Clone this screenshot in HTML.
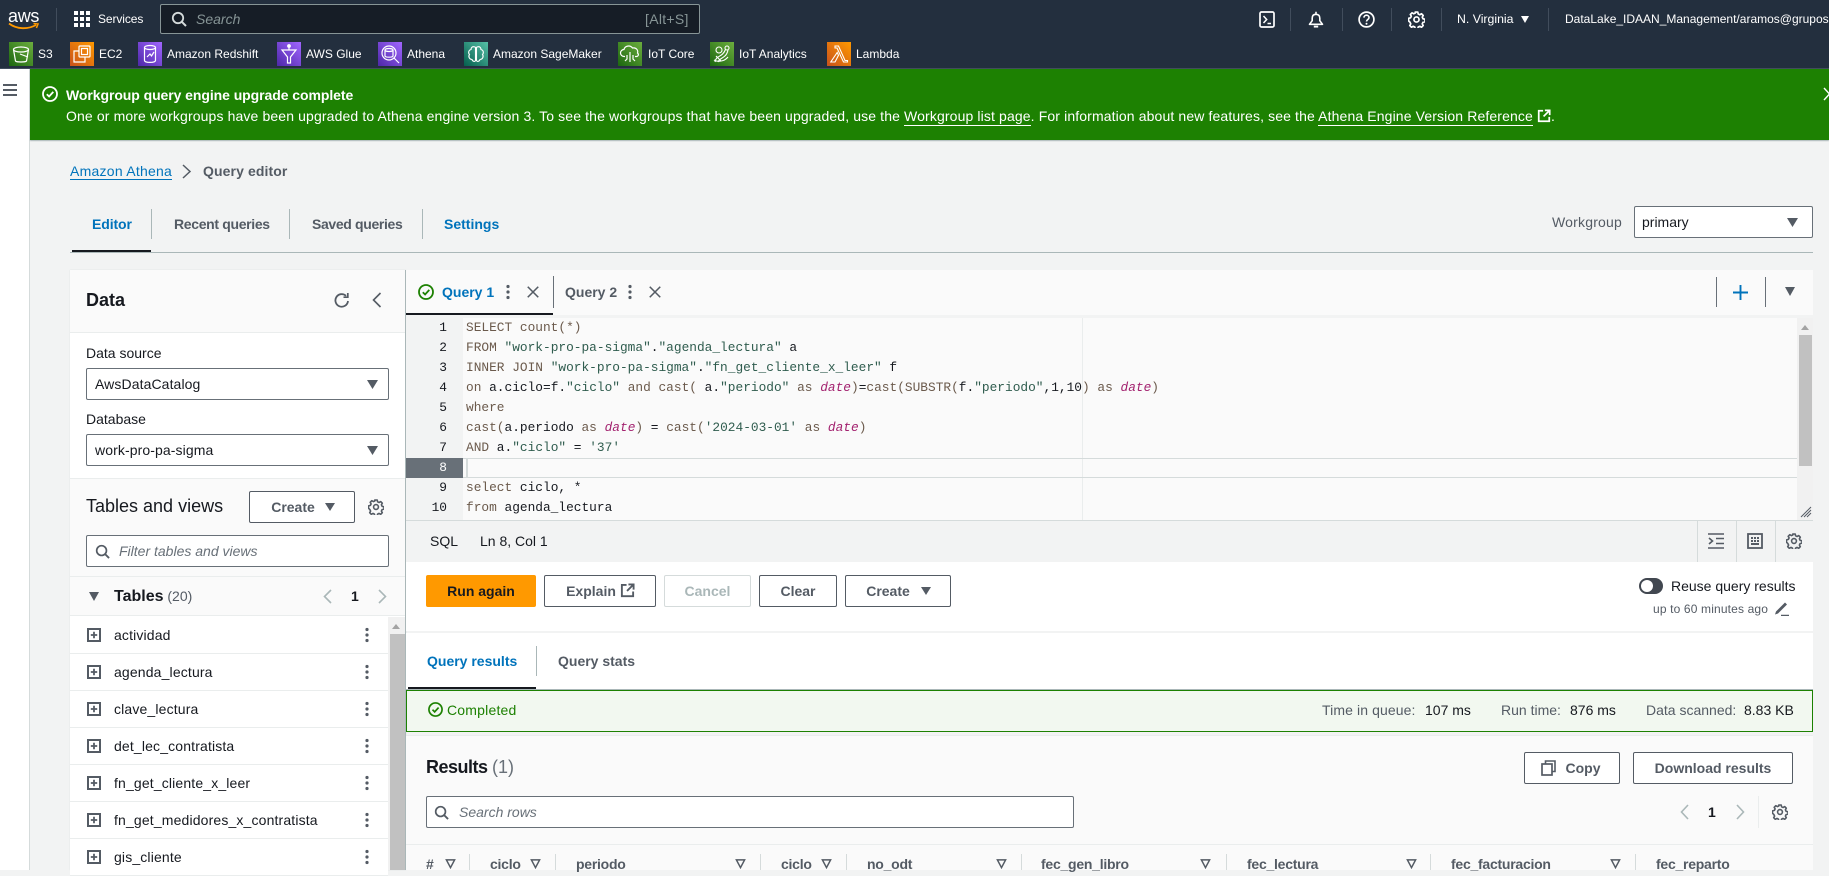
<!DOCTYPE html>
<html lang="en"><head><meta charset="utf-8"><title>Athena Query editor</title>
<style>
*{box-sizing:border-box}
html,body{margin:0;padding:0;width:1829px;height:870px;overflow:hidden;background:#f2f3f3;font-family:"Liberation Sans",Arial,sans-serif;font-size:14px;color:#16191f}
.a{position:absolute}
.t{position:absolute;white-space:nowrap;line-height:20px}
.b{font-weight:700}.g{color:#545b64}.bl{color:#0073bb}.w{color:#fff}
.nav{color:#fff;font-size:12px}
.sv{position:absolute;top:42px;width:24px;height:24px}
.svl{position:absolute;top:44px;white-space:nowrap;line-height:20px;color:#fff;font-size:12px}
.sep{position:absolute;width:1px;background:#414d5c}
.vs{position:absolute;width:1px;background:#aab7b8}
.box{position:absolute;background:#fff;border:1px solid #687078;border-radius:2px;height:32px}
.btn{position:absolute;background:#fff;border:1px solid #545b64;border-radius:2px;height:32px;font-weight:700;color:#545b64;text-align:center;line-height:30px;white-space:nowrap}
.row{position:absolute;left:70px;width:318px;height:37px;background:#fff;border-bottom:1px solid #eaeded}
.row span{position:absolute;left:44px;top:8px;line-height:20px;white-space:nowrap;color:#16191f;letter-spacing:.15px}
.row svg{position:absolute}
.code{position:absolute;left:466px;font-family:"Liberation Mono",monospace;font-size:12.83px;line-height:20px;white-space:pre;color:#16191f}
.ln{position:absolute;left:406px;width:41px;text-align:right;font-family:"Liberation Mono",monospace;font-size:12.83px;line-height:20px;color:#16191f}
.k{color:#6b5a4c}.s{color:#2f5c4e}.d{color:#a3226f;font-style:italic}
.lnk{border-bottom:1px solid #fff;padding-bottom:1px}
.th{position:absolute;top:854px;line-height:20px;font-weight:700;color:#545b64;white-space:nowrap;letter-spacing:-.25px}
.tv{position:absolute;top:854px;width:1px;height:16px;background:#d5dbdb}
</style></head><body>
<svg width="0" height="0" style="position:absolute">
<symbol id="gear" viewBox="0 0 16 16"><path d="M6.8 1h2.400l.4 1.800 1.500.7 1.600-.9 1.600 1.600-.9 1.600.7 1.500 1.900.5v2.300l-1.900.5-.7 1.500.9 1.600-1.600 1.600-1.600-.9-1.500.7-.4 1.900H6.800l-.4-1.900-1.500-.7-1.600.9-1.600-1.600.9-1.600-.7-1.500L.5 9.200V6.900l1.900-.5.7-1.500-.9-1.600 1.600-1.600 1.600.9 1.500-.7z" fill="none" stroke="currentColor" stroke-width="1.600" stroke-linejoin="round"/><circle cx="8" cy="8" r="2.400" fill="none" stroke="currentColor" stroke-width="1.600"/></symbol>
<symbol id="srch" viewBox="0 0 16 16"><circle cx="7" cy="7" r="5.200" fill="none" stroke="currentColor" stroke-width="1.800"/><path d="M10.800 10.800l4.200 4.200" stroke="currentColor" stroke-width="2" fill="none"/></symbol>
<symbol id="chk" viewBox="0 0 16 16"><circle cx="8" cy="8" r="7" fill="none" stroke="currentColor" stroke-width="1.800"/><path d="M4.800 8.200l2.300 2.300 4.200-4.600" fill="none" stroke="currentColor" stroke-width="1.800"/></symbol>
<symbol id="x" viewBox="0 0 16 16"><path d="M2 2l12 12M14 2L2 14" stroke="currentColor" stroke-width="1.800" fill="none"/></symbol>
<symbol id="dots" viewBox="0 0 4 16"><circle cx="2" cy="2.500" r="1.600" fill="currentColor"/><circle cx="2" cy="8" r="1.600" fill="currentColor"/><circle cx="2" cy="13.500" r="1.600" fill="currentColor"/></symbol>
<symbol id="plus" viewBox="0 0 14 14"><rect x="1" y="1" width="12" height="12" fill="#fff" stroke="#545b64" stroke-width="2"/><path d="M7 3.800v6.400M3.800 7h6.400" stroke="#545b64" stroke-width="1.800"/></symbol>
<symbol id="ext" viewBox="0 0 16 16"><path d="M7 2H2v12h12V9" fill="none" stroke="currentColor" stroke-width="2"/><path d="M9 1.500h5.500V7M14 2L7.500 8.500" fill="none" stroke="currentColor" stroke-width="2"/></symbol>
<symbol id="filt" viewBox="0 0 12 12"><path d="M1.500 2h9L6 10.500z" fill="none" stroke="currentColor" stroke-width="1.600"/></symbol>
</svg>

<!-- top nav -->
<div class="a" style="left:0;top:0;width:1829px;height:69px;background:#232f3e;border-bottom:1px solid #414d5c"></div>
<div class="t w" style="left:8px;top:6px;font-size:18px;line-height:20px;letter-spacing:-.3px;font-weight:400">aws</div>
<svg class="a" style="left:8px;top:22px" width="32" height="9" viewBox="0 0 32 9"><path d="M1 1.500C9 7.500 20 7.500 28 3" fill="none" stroke="#f90" stroke-width="1.800"/><path d="M25.500 1.500L30 2l-1.600 4" fill="none" stroke="#f90" stroke-width="1.500"/></svg>
<div class="sep" style="left:56px;top:8px;height:23px"></div>
<svg class="a" style="left:74px;top:11px" width="16" height="16"><g fill="#fff"><rect x="0" y="0" width="4" height="4"/><rect x="6" y="0" width="4" height="4"/><rect x="12" y="0" width="4" height="4"/><rect x="0" y="6" width="4" height="4"/><rect x="6" y="6" width="4" height="4"/><rect x="12" y="6" width="4" height="4"/><rect x="0" y="12" width="4" height="4"/><rect x="6" y="12" width="4" height="4"/><rect x="12" y="12" width="4" height="4"/></g></svg>
<div class="t nav" style="left:98px;top:9px;letter-spacing:-.1px">Services</div>
<div class="a" style="left:160px;top:4px;width:540px;height:30px;background:#161d26;border:1px solid #879596;border-radius:2px"></div>
<svg class="a" style="left:171px;top:11px;color:#d5dbdb" width="16" height="16"><use href="#srch"/></svg>
<div class="t" style="left:196px;top:9px;font-style:italic;color:#879596">Search</div>
<div class="t" style="left:645px;top:9px;color:#879596;font-size:14px;letter-spacing:.3px">[Alt+S]</div>
<svg class="a" style="left:1259px;top:11px" width="16" height="17" viewBox="0 0 16 17"><rect x="1" y="1" width="14" height="15" rx="1.500" fill="none" stroke="#fff" stroke-width="1.700"/><path d="M4.500 5l3.200 3.500-3.200 3.500M8.500 12.500h3.500" fill="none" stroke="#fff" stroke-width="1.500"/></svg>
<div class="sep" style="left:1290px;top:8px;height:23px"></div>
<svg class="a" style="left:1308px;top:11px" width="16" height="17" viewBox="0 0 16 17"><path d="M8 3.300c-2.500 0-3.800 1.500-3.800 3.900v2.500L1.500 13.300h13l-2.700-3.600V7.200C11.800 4.800 10.500 3.300 8 3.300zM8 .8v2.500" fill="none" stroke="#fff" stroke-width="1.600" stroke-linejoin="round"/><path d="M5.800 15.600h4.400" stroke="#fff" stroke-width="1.900"/></svg>
<div class="sep" style="left:1342px;top:8px;height:23px"></div>
<svg class="a" style="left:1358px;top:11px" width="17" height="17" viewBox="0 0 17 17"><circle cx="8.500" cy="8.500" r="7.400" fill="none" stroke="#fff" stroke-width="1.700"/><path d="M6 6.600c0-3.200 5-3.200 5 0 0 1.900-2.500 1.900-2.500 3.900" fill="none" stroke="#fff" stroke-width="1.600"/><circle cx="8.500" cy="12.700" r="1" fill="#fff"/></svg>
<div class="sep" style="left:1391px;top:8px;height:23px"></div>
<svg class="a" style="left:1408px;top:11px;color:#fff" width="17" height="17"><use href="#gear"/></svg>
<div class="sep" style="left:1441px;top:8px;height:23px"></div>
<div class="t nav" style="left:1457px;top:9px;font-size:12.300px">N. Virginia</div>
<svg class="a" style="left:1521px;top:16px" width="8" height="7"><path d="M0 0h8L4 7z" fill="#fff"/></svg>
<div class="sep" style="left:1548px;top:8px;height:23px"></div>
<div class="t nav" style="left:1565px;top:9px">DataLake_IDAAN_Management/aramos@grupos</div>

<!-- services -->
<svg class="sv" style="left:9px;background:linear-gradient(45deg,#1b660f,#6cae3e)" viewBox="0 0 24 24"><g fill="none" stroke="#fff" stroke-width="1.200"><ellipse cx="12" cy="7.500" rx="7.500" ry="2.500"/><path d="M4.500 7.500l2 11.500c.8 1.300 10.200 1.300 11 0l2-11.500M11 12l8 3"/></g></svg><div class="svl" style="left:38px">S3</div>
<svg class="sv" style="left:70px;background:linear-gradient(45deg,#c8511b,#f90)" viewBox="0 0 24 24"><g fill="none" stroke="#fff" stroke-width="1.200"><rect x="9" y="4" width="11" height="11" rx="1"/><rect x="11.500" y="6.500" width="6" height="6"/><path d="M9 9H4v11h11v-5"/></g></svg><div class="svl" style="left:99px">EC2</div>
<svg class="sv" style="left:138px;background:linear-gradient(45deg,#4d27a8,#a166ff)" viewBox="0 0 24 24"><g fill="none" stroke="#fff" stroke-width="1.200"><ellipse cx="12" cy="5.500" rx="5.500" ry="2"/><path d="M6.500 5.500v13c0 2.500 11 2.500 11 0v-13M9 15l3-3 1.500 2 2.500-4"/></g></svg><div class="svl" style="left:167px">Amazon Redshift</div>
<svg class="sv" style="left:277px;background:linear-gradient(45deg,#4d27a8,#a166ff)" viewBox="0 0 24 24"><g fill="none" stroke="#fff" stroke-width="1.200"><path d="M5 8h14l-5.500 7v6h-3v-6zM12 3v5"/><circle cx="12" cy="4" r="1.300" fill="#fff"/></g></svg><div class="svl" style="left:306px">AWS Glue</div>
<svg class="sv" style="left:378px;background:linear-gradient(45deg,#4d27a8,#a166ff)" viewBox="0 0 24 24"><g fill="none" stroke="#fff" stroke-width="1.200"><circle cx="11" cy="11" r="7"/><ellipse cx="11" cy="8" rx="4" ry="1.500"/><path d="M7 8v6c0 1.600 8 1.600 8 0V8M16 16l5 5"/></g></svg><div class="svl" style="left:407px">Athena</div>
<svg class="sv" style="left:464px;background:linear-gradient(45deg,#055f4e,#56c0a7)" viewBox="0 0 24 24"><g fill="none" stroke="#fff" stroke-width="1.100"><path d="M11 5C8 4 7 6 7 7.500 4.500 8 4 11 5.500 12.500 4 14.500 5.500 17.500 8 17.500 8.500 19.500 11 20 11.500 18.500V5.500zM13 5c3-1 4 1 4 2.500 2.500.5 3 3.500 1.500 5 1.500 2 0 5-2.500 5-.5 2-3 2.500-3.500 1V5.500z"/></g></svg><div class="svl" style="left:493px">Amazon SageMaker</div>
<svg class="sv" style="left:618px;background:linear-gradient(45deg,#1b660f,#6cae3e)" viewBox="0 0 24 24"><g fill="none" stroke="#fff" stroke-width="1.200"><path d="M7 14.500H6a3.500 3.500 0 0 1 0-7c.7-3.500 6-5 8.500-1.500 3.500-.7 6 2 5 5 1.800 1.500.5 3.500-1 3.500H17"/><path d="M12 10v10M9 13v4l-2 2M15 13v4l2 2"/></g></svg><div class="svl" style="left:648px">IoT Core</div>
<svg class="sv" style="left:710px;background:linear-gradient(45deg,#1b660f,#6cae3e)" viewBox="0 0 24 24"><g fill="none" stroke="#fff" stroke-width="1.100"><circle cx="17" cy="6" r="2"/><circle cx="9" cy="8" r="3"/><path d="M5 20C6 13 12 16 15.500 7.500M8 20c2-5 8-3 10-12M4 18c3 2 10 2 14-3M6 14l5 5"/></g></svg><div class="svl" style="left:739px">IoT Analytics</div>
<svg class="sv" style="left:827px;background:linear-gradient(45deg,#c8511b,#f90)" viewBox="0 0 24 24"><path d="M8 4h3.500l6.500 14.500h2.500V20h-4L10 6H8zM10.200 10.500l1.300 2.800L8 20H3.800z" fill="none" stroke="#fff" stroke-width="1.100"/></svg><div class="svl" style="left:856px">Lambda</div>

<!-- side + banner -->
<div class="a" style="left:0;top:69px;width:30px;height:801px;background:#fff;border-right:1px solid #d5dbdb"></div>
<svg class="a" style="left:3px;top:84px" width="14" height="12"><path d="M0 1h14M0 6h14M0 11h14" stroke="#545b64" stroke-width="2"/></svg>
<div class="a" style="left:30px;top:69px;width:1799px;height:71px;background:#1d8102;box-shadow:0 1px 1px #aab7b8"></div>
<svg class="a" style="left:42px;top:86px;color:#fff" width="16" height="16"><use href="#chk"/></svg>
<div class="t b w" style="left:66px;top:85px;letter-spacing:-.07px">Workgroup query engine upgrade complete</div>
<div class="t w" style="left:66px;top:106px;letter-spacing:.125px" id="msg">One or more workgroups have been upgraded to Athena engine version 3. To see the workgroups that have been upgraded, use the <span class="lnk">Workgroup list page</span>. For information about new features, see the <span class="lnk">Athena Engine Version Reference</span> <svg width="14" height="14" style="vertical-align:-2px;color:#fff"><use href="#ext"/></svg>.</div>
<svg class="a" style="left:1823px;top:87px" width="12" height="14"><path d="M1 1l11 12M12 1L1 13" stroke="#fff" stroke-width="1.400" fill="none"/></svg>

<!-- breadcrumb -->
<div class="t bl" style="left:70px;top:161px;border-bottom:1px solid #0073bb;line-height:18px;height:19px;padding-top:1px;letter-spacing:.25px">Amazon Athena</div>
<svg class="a" style="left:182px;top:164px" width="10" height="15"><path d="M1 1l7 6.500L1 14" fill="none" stroke="#545b64" stroke-width="1.500"/></svg>
<div class="t b g" style="left:203px;top:161px;letter-spacing:.1px">Query editor</div>

<!-- main tabs -->
<div class="t b bl" style="left:92px;top:214px;letter-spacing:-.1px">Editor</div>
<div class="vs" style="left:151px;top:209px;height:30px"></div>
<div class="t b g" style="left:174px;top:214px;letter-spacing:-.33px">Recent queries</div>
<div class="vs" style="left:289px;top:209px;height:30px"></div>
<div class="t b g" style="left:312px;top:214px;letter-spacing:-.35px">Saved queries</div>
<div class="vs" style="left:422px;top:209px;height:30px"></div>
<div class="t b bl" style="left:444px;top:214px">Settings</div>
<div class="a" style="left:70px;top:252px;width:1743px;height:1px;background:#aab7b8"></div>
<div class="a" style="left:72px;top:250px;width:79px;height:2px;background:#16191f"></div>
<div class="t g" style="left:1552px;top:212px;letter-spacing:.2px">Workgroup</div>
<div class="box" style="left:1634px;top:206px;width:179px"></div>
<div class="t" style="left:1642px;top:212px">primary</div>
<svg class="a" style="left:1787px;top:218px" width="11" height="9"><path d="M0 0h11L5.500 9z" fill="#545b64"/></svg>

<!-- left panel -->
<div class="a" style="left:70px;top:270px;width:336px;height:600px;background:#fff;box-shadow:0 0 1px #d5dbdb"></div>
<div class="a" style="left:70px;top:270px;width:335px;height:63px;background:#fafafa;border-bottom:1px solid #eaeded"></div>
<div class="t b" style="left:86px;top:290px;font-size:18px">Data</div>
<svg class="a" style="left:334px;top:292px" width="16" height="17" viewBox="0 0 16 17"><path d="M14 9a6.300 6.300 0 1 1-2-5.200" fill="none" stroke="#545b64" stroke-width="1.800"/><path d="M13.800 1v4.200H9.500" fill="none" stroke="#545b64" stroke-width="1.700"/></svg>
<svg class="a" style="left:372px;top:292px" width="10" height="16"><path d="M8.500 1L1.500 8l7 7" fill="none" stroke="#545b64" stroke-width="1.600"/></svg>
<div class="t" style="left:86px;top:343px;color:#16191f">Data source</div>
<div class="box" style="left:86px;top:368px;width:303px"></div>
<div class="t" style="left:95px;top:374px;letter-spacing:.1px">AwsDataCatalog</div>
<svg class="a" style="left:367px;top:380px" width="11" height="9"><path d="M0 0h11L5.500 9z" fill="#545b64"/></svg>
<div class="t" style="left:86px;top:409px">Database</div>
<div class="box" style="left:86px;top:434px;width:303px"></div>
<div class="t" style="left:95px;top:440px;letter-spacing:.1px">work-pro-pa-sigma</div>
<svg class="a" style="left:367px;top:446px" width="11" height="9"><path d="M0 0h11L5.500 9z" fill="#545b64"/></svg>
<div class="a" style="left:70px;top:478px;width:335px;height:138px;background:#fafafa;border-top:1px solid #eaeded;border-bottom:1px solid #eaeded"></div>
<div class="t" style="left:86px;top:496px;font-size:18px">Tables and views</div>
<div class="btn" style="left:249px;top:491px;width:106px;padding-right:18px">Create</div>
<svg class="a" style="left:325px;top:503px" width="10" height="8"><path d="M0 0h10L5 8z" fill="#545b64"/></svg>
<svg class="a" style="left:368px;top:499px;color:#545b64" width="16" height="16"><use href="#gear"/></svg>
<div class="box" style="left:86px;top:535px;width:303px"></div>
<svg class="a" style="left:95px;top:544px;color:#545b64" width="15" height="15"><use href="#srch"/></svg>
<div class="t" style="left:119px;top:541px;font-style:italic;color:#687078">Filter tables and views</div>
<div class="a" style="left:70px;top:576px;width:335px;height:1px;background:#eaeded"></div>
<svg class="a" style="left:89px;top:592px" width="10" height="9"><path d="M0 0h10L5 9z" fill="#545b64"/></svg>
<div class="t" style="left:114px;top:586px"><b style="font-size:16px">Tables</b> <span class="g">(20)</span></div>
<svg class="a" style="left:323px;top:589px" width="9" height="15"><path d="M8 1L1.500 7.500 8 14" fill="none" stroke="#aab7b8" stroke-width="1.600"/></svg>
<div class="t b" style="left:351px;top:586px">1</div>
<svg class="a" style="left:378px;top:589px" width="9" height="15"><path d="M1 1l6.500 6.500L1 14" fill="none" stroke="#aab7b8" stroke-width="1.600"/></svg>

<div class="row" style="top:617px"><svg style="left:17px;top:11px" width="14" height="14"><use href="#plus"/></svg><span>actividad</span><svg style="left:295px;top:10px;color:#545b64" width="4" height="16"><use href="#dots"/></svg></div>
<div class="row" style="top:654px"><svg style="left:17px;top:11px" width="14" height="14"><use href="#plus"/></svg><span>agenda_lectura</span><svg style="left:295px;top:10px;color:#545b64" width="4" height="16"><use href="#dots"/></svg></div>
<div class="row" style="top:691px"><svg style="left:17px;top:11px" width="14" height="14"><use href="#plus"/></svg><span>clave_lectura</span><svg style="left:295px;top:10px;color:#545b64" width="4" height="16"><use href="#dots"/></svg></div>
<div class="row" style="top:728px"><svg style="left:17px;top:11px" width="14" height="14"><use href="#plus"/></svg><span>det_lec_contratista</span><svg style="left:295px;top:10px;color:#545b64" width="4" height="16"><use href="#dots"/></svg></div>
<div class="row" style="top:765px"><svg style="left:17px;top:11px" width="14" height="14"><use href="#plus"/></svg><span>fn_get_cliente_x_leer</span><svg style="left:295px;top:10px;color:#545b64" width="4" height="16"><use href="#dots"/></svg></div>
<div class="row" style="top:802px"><svg style="left:17px;top:11px" width="14" height="14"><use href="#plus"/></svg><span>fn_get_medidores_x_contratista</span><svg style="left:295px;top:10px;color:#545b64" width="4" height="16"><use href="#dots"/></svg></div>
<div class="row" style="top:839px"><svg style="left:17px;top:11px" width="14" height="14"><use href="#plus"/></svg><span>gis_cliente</span><svg style="left:295px;top:10px;color:#545b64" width="4" height="16"><use href="#dots"/></svg></div>
<div class="a" style="left:388px;top:617px;width:17px;height:253px;background:#f1f1f1"></div>
<div class="a" style="left:390px;top:634px;width:15px;height:236px;background:#c1c1c1"></div>
<svg class="a" style="left:392px;top:624px" width="8" height="5"><path d="M0 5h8L4 0z" fill="#a3a3a3"/></svg>
<div class="a" style="left:405px;top:270px;width:1px;height:600px;background:#aab7b8"></div>

<!-- editor -->
<div class="a" style="left:406px;top:270px;width:1407px;height:45px;background:#fafafa"></div>
<div class="a" style="left:406px;top:315px;width:1407px;height:3px;background:#f2f3f3"></div>
<svg class="a" style="left:418px;top:284px;color:#1d8102" width="16" height="16"><use href="#chk"/></svg>
<div class="t b bl" style="left:442px;top:282px">Query 1</div>
<svg class="a" style="left:506px;top:284px;color:#545b64" width="4" height="16"><use href="#dots"/></svg>
<svg class="a" style="left:526px;top:285px;color:#545b64" width="14" height="14"><use href="#x"/></svg>
<div class="a" style="left:553px;top:276px;width:1px;height:32px;background:#687078"></div>
<div class="a" style="left:406px;top:313px;width:147px;height:2px;background:#16191f"></div>
<div class="t b g" style="left:565px;top:282px">Query 2</div>
<svg class="a" style="left:628px;top:284px;color:#545b64" width="4" height="16"><use href="#dots"/></svg>
<svg class="a" style="left:648px;top:285px;color:#545b64" width="14" height="14"><use href="#x"/></svg>
<div class="a" style="left:1716px;top:277px;width:1px;height:30px;background:#687078"></div>
<svg class="a" style="left:1733px;top:285px" width="15" height="15"><path d="M7.500 0v15M0 7.500h15" stroke="#0073bb" stroke-width="1.900"/></svg>
<div class="a" style="left:1765px;top:277px;width:1px;height:30px;background:#687078"></div>
<svg class="a" style="left:1785px;top:287px" width="10" height="9"><path d="M0 0h10L5 9z" fill="#545b64"/></svg>

<div class="a" style="left:406px;top:318px;width:1391px;height:202px;background:#fafafa"></div>
<div class="a" style="left:406px;top:318px;width:57px;height:202px;background:#f2f3f3"></div>
<div class="a" style="left:1082px;top:318px;width:1px;height:202px;background:#eaeded"></div>
<div class="a" style="left:463px;top:458px;width:1334px;height:20px;border-top:1px solid #d5dbdb;border-bottom:1px solid #d5dbdb"></div>
<div class="a" style="left:406px;top:458px;width:57px;height:20px;background:#687078"></div>
<div class="a" style="left:466px;top:459px;width:2px;height:18px;background:#d5dbdb"></div>
<div class="ln" style="top:318px">1</div><div class="ln" style="top:338px">2</div><div class="ln" style="top:358px">3</div><div class="ln" style="top:378px">4</div><div class="ln" style="top:398px">5</div><div class="ln" style="top:418px">6</div><div class="ln" style="top:438px">7</div><div class="ln" style="top:458px;color:#fff">8</div><div class="ln" style="top:478px">9</div><div class="ln" style="top:498px">10</div>
<div class="code" style="top:318px"><span class="k">SELECT count(*)</span></div>
<div class="code" style="top:338px"><span class="k">FROM</span> <span class="s">"work-pro-pa-sigma"</span>.<span class="s">"agenda_lectura"</span> a</div>
<div class="code" style="top:358px"><span class="k">INNER JOIN</span> <span class="s">"work-pro-pa-sigma"</span>.<span class="s">"fn_get_cliente_x_leer"</span> f</div>
<div class="code" style="top:378px"><span class="k">on</span> a.ciclo=f.<span class="s">"ciclo"</span> <span class="k">and cast(</span> a.<span class="s">"periodo"</span> <span class="k">as</span> <span class="d">date</span><span class="k">)</span>=<span class="k">cast(SUBSTR(</span>f.<span class="s">"periodo"</span>,1,10<span class="k">) as</span> <span class="d">date</span><span class="k">)</span></div>
<div class="code" style="top:398px"><span class="k">where</span></div>
<div class="code" style="top:418px"><span class="k">cast(</span>a.periodo <span class="k">as</span> <span class="d">date</span><span class="k">)</span> = <span class="k">cast(</span><span class="s">'2024-03-01'</span> <span class="k">as</span> <span class="d">date</span><span class="k">)</span></div>
<div class="code" style="top:438px"><span class="k">AND</span> a.<span class="s">"ciclo"</span> = <span class="s">'37'</span></div>
<div class="code" style="top:478px"><span class="k">select</span> ciclo, *</div>
<div class="code" style="top:498px"><span class="k">from</span> agenda_lectura</div>
<div class="a" style="left:1797px;top:318px;width:16px;height:202px;background:#f1f1f1"></div>
<div class="a" style="left:1799px;top:335px;width:13px;height:131px;background:#c1c1c1"></div>
<svg class="a" style="left:1801px;top:325px" width="8" height="5"><path d="M0 5h8L4 0z" fill="#a3a3a3"/></svg>
<svg class="a" style="left:1800px;top:506px" width="12" height="12"><path d="M1 11L11 1M4 11l7-7M7 11l4-4" stroke="#545b64" stroke-width="1" fill="none"/></svg>
<div class="a" style="left:406px;top:520px;width:1407px;height:42px;background:#f2f3f3;border-top:1px solid #d5dbdb"></div>
<div class="t" style="left:430px;top:531px">SQL</div>
<div class="t g" style="left:480px;top:531px;color:#16191f">Ln 8, Col 1</div>
<div class="a" style="left:1697px;top:521px;width:1px;height:41px;background:#d5dbdb"></div>
<div class="a" style="left:1736px;top:521px;width:1px;height:41px;background:#d5dbdb"></div>
<div class="a" style="left:1775px;top:521px;width:1px;height:41px;background:#d5dbdb"></div>
<svg class="a" style="left:1708px;top:533px" width="16" height="16"><path d="M0 1h16M0 15h16M8 5.500h8M8 10.500h8M1 5l3.500 3L1 11" stroke="#545b64" stroke-width="1.600" fill="none"/></svg>
<svg class="a" style="left:1747px;top:533px" width="16" height="16"><rect x="1" y="1" width="14" height="14" fill="none" stroke="#545b64" stroke-width="1.800"/><g fill="#545b64"><rect x="4" y="4" width="2" height="2"/><rect x="7" y="4" width="2" height="2"/><rect x="10" y="4" width="2" height="2"/><rect x="4" y="7" width="2" height="2"/><rect x="7" y="7" width="2" height="2"/><rect x="10" y="7" width="2" height="2"/><rect x="4" y="10" width="8" height="2"/></g></svg>
<svg class="a" style="left:1786px;top:533px;color:#545b64" width="16" height="16"><use href="#gear"/></svg>

<!-- run section -->
<div class="a" style="left:406px;top:562px;width:1407px;height:69px;background:#fff"></div>
<div class="a" style="left:426px;top:575px;width:110px;height:32px;background:#f90;border-radius:2px;text-align:center;line-height:32px;font-weight:700;color:#16191f">Run again</div>
<div class="btn" style="left:544px;top:575px;width:112px;padding-right:18px">Explain</div>
<svg class="a" style="left:620px;top:583px;color:#545b64" width="15" height="15"><use href="#ext"/></svg>
<div class="btn" style="left:664px;top:575px;width:87px;color:#aab7b8;border-color:#d5dbdb">Cancel</div>
<div class="btn" style="left:759px;top:575px;width:78px">Clear</div>
<div class="btn" style="left:845px;top:575px;width:106px;padding-right:20px">Create</div>
<svg class="a" style="left:921px;top:587px" width="10" height="8"><path d="M0 0h10L5 8z" fill="#545b64"/></svg>
<div class="a" style="left:1639px;top:578px;width:24px;height:16px;border-radius:8px;background:#414750"></div>
<div class="a" style="left:1641px;top:580px;width:12px;height:12px;border-radius:6px;background:#fff"></div>
<div class="t" style="left:1671px;top:576px">Reuse query results</div>
<div class="t g" style="left:1653px;top:599px;font-size:12px;letter-spacing:.15px">up to 60 minutes ago</div>
<svg class="a" style="left:1774px;top:601px" width="16" height="15"><path d="M2 10.500L11 1.500l2 2-9 9-3 1z" fill="#545b64"/><path d="M7 14.500h8" stroke="#545b64" stroke-width="1.500"/></svg>

<!-- results tabs -->
<div class="a" style="left:406px;top:633px;width:1407px;height:57px;background:#fff"></div>
<div class="t b bl" style="left:427px;top:651px">Query results</div>
<div class="vs" style="left:536px;top:646px;height:30px"></div>
<div class="t b g" style="left:558px;top:651px">Query stats</div>
<div class="a" style="left:406px;top:689px;width:1407px;height:1px;background:#aab7b8"></div>
<div class="a" style="left:408px;top:687px;width:128px;height:2px;background:#16191f"></div>
<div class="a" style="left:406px;top:690px;width:1407px;height:42px;background:#f2f8f0;border:1px solid #1d8102"></div>
<svg class="a" style="left:428px;top:702px;color:#1d8102" width="15" height="15"><use href="#chk"/></svg>
<div class="t" style="left:447px;top:700px;color:#1d8102;letter-spacing:.2px">Completed</div>
<div class="t g" style="left:1322px;top:700px;letter-spacing:.1px">Time in queue:</div><div class="t" style="left:1425px;top:700px">107 ms</div>
<div class="t g" style="left:1501px;top:700px">Run time:</div><div class="t" style="left:1570px;top:700px">876 ms</div>
<div class="t g" style="left:1646px;top:700px">Data scanned:</div><div class="t" style="left:1744px;top:700px">8.83 KB</div>

<!-- results -->
<div class="a" style="left:406px;top:735px;width:1407px;height:135px;background:#fafafa;border-top:1px solid #eaeded"></div>
<div class="t b" style="left:426px;top:757px;font-size:18px;letter-spacing:-.5px">Results</div>
<div class="t" style="left:492px;top:757px;font-size:18px;color:#687078">(1)</div>
<div class="btn" style="left:1524px;top:752px;width:96px;padding-left:22px">Copy</div>
<svg class="a" style="left:1541px;top:760px" width="15" height="16"><path d="M4.500 4V1h9.500v10.500H11" fill="none" stroke="#545b64" stroke-width="1.600"/><rect x="1" y="4" width="10" height="11" fill="none" stroke="#545b64" stroke-width="1.700"/></svg>
<div class="btn" style="left:1633px;top:752px;width:160px">Download results</div>
<div class="box" style="left:426px;top:796px;width:648px"></div>
<svg class="a" style="left:434px;top:805px;color:#545b64" width="15" height="15"><use href="#srch"/></svg>
<div class="t" style="left:459px;top:802px;font-style:italic;color:#687078">Search rows</div>
<svg class="a" style="left:1680px;top:804px" width="9" height="16"><path d="M8 1L1.500 8 8 15" fill="none" stroke="#aab7b8" stroke-width="1.600"/></svg>
<div class="t b" style="left:1708px;top:802px">1</div>
<svg class="a" style="left:1736px;top:804px" width="9" height="16"><path d="M1 1l6.500 7L1 15" fill="none" stroke="#aab7b8" stroke-width="1.600"/></svg>
<div class="a" style="left:1758px;top:796px;width:1px;height:32px;background:#eaeded"></div>
<svg class="a" style="left:1772px;top:804px;color:#545b64" width="16" height="16"><use href="#gear"/></svg>
<div class="a" style="left:406px;top:844px;width:1407px;height:1px;background:#eaeded"></div>

<div class="th" style="left:426px">#</div><svg class="a" style="left:445px;top:858px;color:#545b64" width="11" height="11"><use href="#filt"/></svg><div class="tv" style="left:469px"></div>
<div class="th" style="left:490px">ciclo</div><svg class="a" style="left:530px;top:858px;color:#545b64" width="11" height="11"><use href="#filt"/></svg><div class="tv" style="left:555px"></div>
<div class="th" style="left:576px">periodo</div><svg class="a" style="left:735px;top:858px;color:#545b64" width="11" height="11"><use href="#filt"/></svg><div class="tv" style="left:760px"></div>
<div class="th" style="left:781px">ciclo</div><svg class="a" style="left:821px;top:858px;color:#545b64" width="11" height="11"><use href="#filt"/></svg><div class="tv" style="left:846px"></div>
<div class="th" style="left:867px">no_odt</div><svg class="a" style="left:996px;top:858px;color:#545b64" width="11" height="11"><use href="#filt"/></svg><div class="tv" style="left:1021px"></div>
<div class="th" style="left:1041px">fec_gen_libro</div><svg class="a" style="left:1200px;top:858px;color:#545b64" width="11" height="11"><use href="#filt"/></svg><div class="tv" style="left:1226px"></div>
<div class="th" style="left:1247px">fec_lectura</div><svg class="a" style="left:1406px;top:858px;color:#545b64" width="11" height="11"><use href="#filt"/></svg><div class="tv" style="left:1430px"></div>
<div class="th" style="left:1451px">fec_facturacion</div><svg class="a" style="left:1610px;top:858px;color:#545b64" width="11" height="11"><use href="#filt"/></svg><div class="tv" style="left:1635px"></div>
<div class="th" style="left:1656px">fec_reparto</div>
</body></html>
